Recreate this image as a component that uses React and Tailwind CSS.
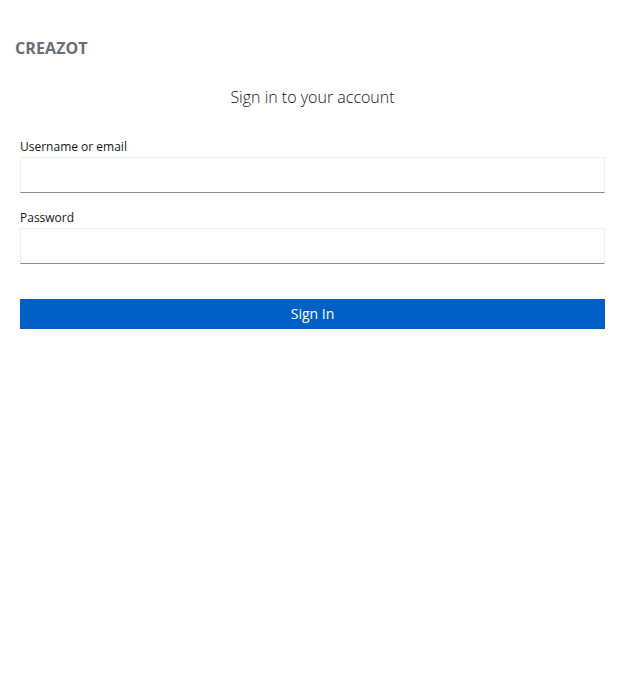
export default function App() {
  return (
    <div className="min-h-screen bg-white text-[#151515]" style={{ fontFamily: '"Open Sans", "Liberation Sans", sans-serif' }}>
      {/* Brand */}
      <header className="px-[15px] pt-[38px]">
        <div className="text-[16px] font-bold leading-[20px] text-[#6a6e73] tracking-[0.1px]">CREAZOT</div>
      </header>

      {/* Title */}
      <h1 className="mt-[27px] text-center text-[16px] font-light leading-[24px] text-[#151515]">
        Sign in to your account
      </h1>

      {/* Form */}
      <form className="px-5 mt-[30px]" onSubmit={(e) => e.preventDefault()}>
        <div className="mb-[17px]">
          <label className="block text-[12px] leading-[16px] text-[#151515] mb-[2px]">Username or email</label>
          <input
            type="text"
            className="block w-full h-[36px] px-2 border border-[#f0f0f0] border-b-[#8a8d90] bg-white outline-none text-sm"
          />
        </div>
        <div>
          <label className="block text-[12px] leading-[16px] text-[#151515] mb-[2px]">Password</label>
          <input
            type="password"
            className="block w-full h-[36px] px-2 border border-[#f0f0f0] border-b-[#8a8d90] bg-white outline-none text-sm"
          />
        </div>
        <button
          type="submit"
          className="mt-[35px] block w-full h-[30px] bg-[#0060c6] text-white text-[14px] leading-[30px]"
        >
          Sign In
        </button>
      </form>
    </div>
  );
}
